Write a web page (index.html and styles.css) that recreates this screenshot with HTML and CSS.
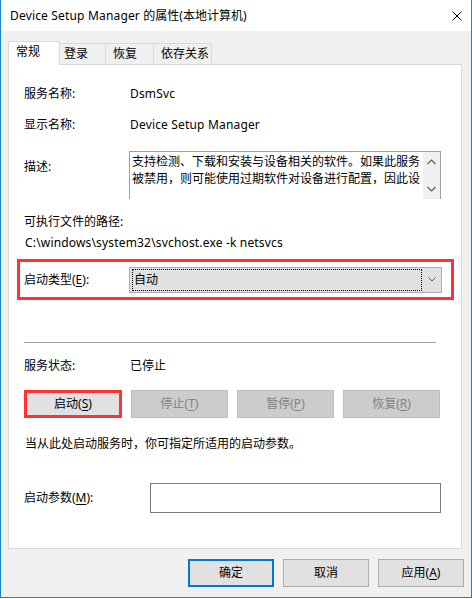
FILE: index.html
```html
<!DOCTYPE html>
<html lang="zh-CN">
<head>
<meta charset="utf-8">
<title>Device Setup Manager 的属性(本地计算机)</title>
<link rel="stylesheet" href="styles.css">
</head>
<body>
<div class="window">
  <div class="titlebar">
    <span class="title"><span class="lat">Device Setup Manager </span>的属性(本地计算机)</span>
    <svg class="close" width="10" height="10" viewBox="0 0 10 10"><path d="M0.5 0.5 L9.5 9.5 M9.5 0.5 L0.5 9.5" stroke="#000" stroke-width="1" fill="none"/></svg>
  </div>
  <div class="client">
    <div class="tabs">
      <div class="tab active t1">常规</div>
      <div class="tab t2">登录</div>
      <div class="tab t3">恢复</div>
      <div class="tab t4">依存关系</div>
    </div>
    <div class="panel">
      <div class="row r1"><span class="label">服务名称:</span><span class="value lat">DsmSvc</span></div>
      <div class="row r2"><span class="label">显示名称:</span><span class="value lat">Device Setup Manager</span></div>
      <div class="desc-row">
        <span class="label desc-label">描述:</span>
        <div class="desc-box">
          <div class="desc-text">支持检测、下载和安装与设备相关的软件。如果此服务被禁用，则可能使用过期软件对设备进行配置，因此设备可能无法正常工作。</div>
          <div class="scrollbar">
            <svg width="9" height="6" viewBox="0 0 9 6"><polyline points="0.5,5 4.5,1 8.5,5" fill="none" stroke="#606060" stroke-width="1.2"/></svg>
            <svg width="9" height="6" viewBox="0 0 9 6"><polyline points="0.5,1 4.5,5 8.5,1" fill="none" stroke="#606060" stroke-width="1.2"/></svg>
          </div>
        </div>
      </div>
      <div class="line path-label">可执行文件的路径:</div>
      <div class="line path lat">C:\windows\system32\svchost.exe -k netsvcs</div>
      <div class="startup-type">
        <span class="label">启动类型(<u>E</u>):</span>
        <div class="combo">
          <span class="focus">自动</span>
          <span class="arrow"><svg width="8" height="5" viewBox="0 0 8 5"><polyline points="0.5,0.5 4,4 7.5,0.5" fill="none" stroke="#606060" stroke-width="1"/></svg></span>
        </div>
      </div>
      <div class="sep"></div>
      <div class="row status"><span class="label">服务状态:</span><span class="value">已停止</span></div>
      <div class="btnrow">
        <div class="btn start">启动(<u>S</u>)</div>
        <div class="btn disabled">停止(<u>T</u>)</div>
        <div class="btn disabled">暂停(<u>P</u>)</div>
        <div class="btn disabled">恢复(<u>R</u>)</div>
      </div>
      <div class="line hint">当从此处启动服务时，你可指定所适用的启动参数。</div>
      <div class="params">
        <span class="plabel">启动参数(<u>M</u>):</span>
        <div class="input"></div>
      </div>
    </div>
    <div class="actions">
      <div class="btn dlg default">确定</div>
      <div class="btn dlg">取消</div>
      <div class="btn dlg">应用(<u>A</u>)</div>
    </div>
  </div>
</div>
</body>
</html>
```
FILE: styles.css
```css
html, body {
  margin: 0;
  padding: 0;
  background: #ffffff;
}
body {
  font-family: "Noto Sans", "Noto Sans CJK SC", sans-serif;
  font-size: 12px;
  color: #000;
  text-spacing-trim: space-all;
}
.lat {
  letter-spacing: 0.17px;
}
u {
  text-decoration: underline;
  text-underline-offset: 2px;
}
.window {
  width: 472px;
  height: 598px;
  box-sizing: border-box;
  border: 1px solid #1883d7;
  border-top: none;
  background: #f0f0f0;
  display: flex;
  flex-direction: column;
}
.titlebar {
  height: 31px;
  flex: none;
  background: #fff;
  display: flex;
  align-items: center;
  justify-content: space-between;
  padding: 0 9px;
}
.title {
  line-height: 16px;
}
.close {
  display: block;
}
.client {
  flex: 1;
  display: flex;
  flex-direction: column;
  padding: 10px 9px 10px 7px;
}
.tabs {
  display: flex;
  align-items: flex-end;
  height: 24px;
  flex: none;
}
.tab {
  box-sizing: border-box;
  height: 22px;
  border-top: 1px solid #d9d9d9;
  border-right: 1px solid #d9d9d9;
  line-height: 20px;
  padding-left: 6px;
  background: #f0f0f0;
}
.tab.active {
  height: 24px;
  background: #fff;
  border-left: 1px solid #d9d9d9;
  position: relative;
  z-index: 1;
  padding-left: 7px;
}
.t1 { width: 52px; }
.t2 { width: 46px; padding-left: 4px; }
.t3 { width: 48px; padding-left: 7px; }
.t4 { width: 58px; padding-left: 7px; }
.panel {
  margin-top: -1px;
  height: 485px;
  box-sizing: border-box;
  border: 1px solid #d9d9d9;
  background: #fff;
  padding-left: 15px;
  flex: none;
}
.row {
  display: flex;
  align-items: center;
  height: 16px;
  line-height: 16px;
}
.label {
  width: 105px;
  flex: none;
  line-height: 16px;
}
.value {
  padding-left: 1px;
}
.r1 { margin-top: 21px; }
.r2 { margin-top: 15px; }
.desc-row {
  display: flex;
  align-items: flex-start;
  margin-top: 18px;
}
.desc-label {
  padding-top: 8px;
}
.desc-box {
  width: 312px;
  height: 48px;
  box-sizing: border-box;
  border: 1px solid #a0a0a0;
  border-bottom: none;
  display: flex;
}
.desc-text {
  flex: 1;
  padding: 1px 0 0 2px;
  line-height: 17px;
  height: 34px;
  overflow: hidden;
}
.scrollbar {
  width: 17px;
  flex: none;
  background: #f0f0f0;
  display: flex;
  flex-direction: column;
  align-items: center;
  justify-content: space-between;
  padding: 7px 0 7px;
  box-sizing: border-box;
}
.scrollbar svg {
  display: block;
}
.line {
  line-height: 16px;
  height: 16px;
}
.path-label { margin-top: 15px; }
.path { margin-top: 5px; padding-left: 1px; }
.startup-type {
  margin-top: 8px;
  margin-left: -7px;
  width: 437px;
  height: 41px;
  box-sizing: border-box;
  border: 3px solid #ff3333;
  padding-left: 4px;
  display: flex;
  align-items: center;
}
.combo {
  width: 313px;
  height: 26px;
  box-sizing: border-box;
  border: 1px solid #adadad;
  background: #e1e1e1;
  display: flex;
  align-items: center;
  padding-left: 2px;
}
.focus {
  width: 290px;
  height: 22px;
  box-sizing: border-box;
  border: 1px dotted #000;
  line-height: 20px;
  padding-left: 1px;
}
.arrow {
  flex: 1;
  display: flex;
  justify-content: center;
  align-items: center;
}
.arrow svg { display: block; }
.sep {
  margin-top: 42px;
  width: 412px;
  height: 1px;
  background: #a0a0a0;
}
.status { margin-top: 15px; }
.btnrow {
  margin-top: 16px;
  display: flex;
  gap: 9px;
}
.btn {
  box-sizing: border-box;
  height: 28px;
  width: 97px;
  border: 1px solid #adadad;
  background: #e1e1e1;
  display: flex;
  align-items: center;
  justify-content: center;
  line-height: 16px;
}
.btn.start {
  width: 98px;
  border: 3px solid #ff3333;
}
.btn.disabled {
  background: #cccccc;
  border-color: #bfbfbf;
  color: #838383;
}
.hint {
  margin-top: 18px;
  padding-left: 1px;
}
.params {
  margin-top: 31px;
  display: flex;
  align-items: center;
}
.plabel {
  width: 126px;
  flex: none;
  line-height: 16px;
}
.input {
  width: 291px;
  height: 30px;
  box-sizing: border-box;
  border: 1px solid #7a7a7a;
  background: #fff;
}
.actions {
  margin-top: 10px;
  margin-right: -2px;
  display: flex;
  justify-content: flex-end;
  gap: 9px;
}
.btn.dlg {
  width: 86px;
}
.btn.default {
  border: 2px solid #0078d7;
}
```
